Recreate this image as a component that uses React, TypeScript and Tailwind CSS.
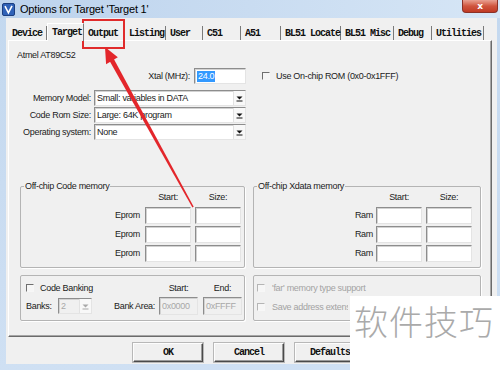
import React from "react"

const ui = "font-['Liberation_Sans',Arial,sans-serif] text-[9px] tracking-[-0.3px] leading-[11px] text-[#1b1b1b]"
const mono = "font-['Liberation_Mono','Courier_New',monospace] font-bold text-[10px] tracking-[-1px] text-[#111]"
const sunken =
  "border border-t-[#8d8d8d] border-l-[#8d8d8d] border-r-[#e4e4e4] border-b-[#e4e4e4] shadow-[inset_1px_1px_0_#d2d2d2]"

// ─── small controls ──────────────────────────────────────────────────────────

function Field({ className, value, disabled, selected }: { className: string; value?: string; disabled?: boolean; selected?: boolean }) {
  return (
    <div className={`flex items-center pl-[2px] ${sunken} ${disabled ? "bg-[#f0f0f0] text-[#a8a8a8]" : "bg-white"} ${className}`}>
      {value && (selected ? <span className="bg-[#3399ff] px-[1px] text-white">{value}</span> : <span>{value}</span>)}
    </div>
  )
}

function Select({ className, value, disabled }: { className: string; value: string; disabled?: boolean }) {
  const c = disabled ? "#a8a8a8" : "#111"
  return (
    <div className={`flex items-stretch ${sunken} ${disabled ? "bg-[#f0f0f0]" : "bg-white"} ${className}`}>
      <span className={`flex flex-1 items-center pl-[2px] ${disabled ? "text-[#a8a8a8]" : ""}`}>{value}</span>
      <span className="flex w-[12px] items-center justify-center border-l border-[#e2e2e2] bg-[#f8f8f8]">
        <svg width="7" height="7" viewBox="0 0 7 7">
          <path d="M0.5 1.5h6L3.5 4.5z" fill={c} />
          <path d="M0.5 6h6" stroke={c} strokeWidth="1" />
        </svg>
      </span>
    </div>
  )
}

function Check({ disabled }: { disabled?: boolean }) {
  return (
    <span
      className={`block h-[8px] w-[8px] shrink-0 border border-r-[#f7f7f7] border-b-[#f7f7f7] bg-[#f6f6f6] ${
        disabled ? "border-t-[#b5b5b5] border-l-[#b5b5b5]" : "border-t-[#6f6f6f] border-l-[#6f6f6f]"
      }`}
    />
  )
}

function Legend({ text }: { text: string }) {
  return <span className="-mt-[6px] ml-[3px] self-start bg-[#f0f0f0] px-[1px]">{text}</span>
}

// ─── tabs ────────────────────────────────────────────────────────────────────

const tabs: { label: string; w: string; selected?: boolean }[] = [
  { label: "Device", w: "w-[39px]" },
  { label: "Target", w: "w-[37px]", selected: true },
  { label: "Output", w: "w-[41px]" },
  { label: "Listing", w: "w-[41px]" },
  { label: "User", w: "w-[37px]" },
  { label: "C51", w: "w-[38px]" },
  { label: "A51", w: "w-[40px]" },
  { label: "BL51 Locate", w: "w-[60px]" },
  { label: "BL51 Misc", w: "w-[53px]" },
  { label: "Debug", w: "w-[38px]" },
  { label: "Utilities", w: "w-[52px]" },
]

function Tabs() {
  return (
    <div className={`flex h-[17px] items-end ${mono}`}>
      {tabs.map((t) =>
        t.selected ? (
          <div
            key={t.label}
            className={`relative z-10 -mb-[1px] flex h-[18px] items-start border-t border-l border-r border-t-white border-l-white border-r-[#7a7a7a] bg-[#f0f0f0] pl-[4px] pt-[3px] ${t.w}`}
          >
            {t.label}
          </div>
        ) : (
          <div key={t.label} className={`flex h-[14px] items-center border-r border-r-[#7a7a7a] pl-[4px] ${t.w}`}>
            {t.label}
          </div>
        )
      )}
    </div>
  )
}

// ─── memory groups ───────────────────────────────────────────────────────────

function MemGroup({ title, label, gap, className }: { title: string; label: string; gap: string; className: string }) {
  return (
    <div className={`flex h-[82px] flex-col rounded-[2px] border border-[#b4b4b4] shadow-[1px_1px_0_#fff] ${className}`}>
      <Legend text={title} />
      <div className="flex h-[11px]">
        <span className={gap === "ml-[5px]" ? "w-[124px]" : "w-[122px]"} />
        <span className="w-[46px] text-center">Start:</span>
        <span className="ml-[4px] w-[46px] text-center">Size:</span>
      </div>
      <div className="mt-[4px] flex flex-col gap-[2px]">
        {[0, 1, 2].map((i) => (
          <div key={i} className="flex h-[17px] items-center">
            <span className="w-[119px] text-right">{label}</span>
            <Field className={`${gap} h-[17px] w-[46px]`} />
            <Field className="ml-[4px] h-[17px] w-[46px]" />
          </div>
        ))}
      </div>
    </div>
  )
}

// ─── dialog ──────────────────────────────────────────────────────────────────

export default function App() {
  return (
    <div className={`relative h-[370px] w-[500px] overflow-hidden bg-linear-to-b from-[#c3d8ef] to-[#cfe0f3] ${ui}`}>
      {/* Title bar */}
      <div className="flex h-[18px] items-center bg-linear-to-r from-[#bcd3ed] via-[#c9dcf1] to-[#d6e6f6] pl-[2px]">
        <svg width="13" height="13" viewBox="0 0 13 13">
          <rect x="0.5" y="0.5" width="12" height="12" rx="1.5" fill="#2f62b8" stroke="#1c3f80" />
          <path d="M3 3.2l3.4 6.6 3.6-7" fill="none" stroke="#fff" strokeWidth="1.6" />
        </svg>
        <span className="ml-[5px] text-[11px] tracking-[-0.2px] text-black">Options for Target 'Target 1'</span>
        <div className="ml-auto mr-[2px] flex h-[13px] w-[36px] items-center justify-center self-start rounded-b-[4px] border border-t-0 border-[#8b3126] bg-linear-to-b from-[#e8a091] via-[#d0553e] to-[#c03a24]">
          <span className="font-['DejaVu_Sans',sans-serif] text-[9px] font-bold leading-none text-white">x</span>
        </div>
      </div>

      {/* Client area */}
      <div className="ml-[6px] mr-[3px] h-[346px] bg-[#f0f0f0] pl-[2px] pt-[5px]">
        <Tabs />

        <div className="flex h-[297px] w-[484px] flex-col border border-t-white border-l-white border-r-[#6b6b6b] border-b-[#6b6b6b] shadow-[inset_-1px_-1px_0_#a6a6a6]">
          <div className="mt-[9px] h-[11px] pl-[8px]">Atmel AT89C52</div>

          <div className="mt-[7px] flex h-[16px] items-center">
            <span className="w-[181px] text-right">Xtal (MHz):</span>
            <Field className="ml-[4px] h-[16px] w-[52px]" value="24.0" selected />
            <span className="ml-[16px]">
              <Check />
            </span>
            <span className="ml-[6px]">Use On-chip ROM (0x0-0x1FFF)</span>
          </div>

          <div className="mt-[6px] flex flex-col gap-[1px]">
            {[
              ["Memory Model:", "Small: variables in DATA"],
              ["Code Rom Size:", "Large: 64K program"],
              ["Operating system:", "None"],
            ].map(([label, value]) => (
              <div key={label} className="flex h-[16px] items-center">
                <span className="w-[82px] text-right">{label}</span>
                <Select className="ml-[3px] h-[16px] w-[152px]" value={value} />
              </div>
            ))}
          </div>

          <div className="ml-[11px] mt-[46px] flex">
            <MemGroup title="Off-chip Code memory" label="Eprom" gap="ml-[5px]" className="w-[225px]" />
            <MemGroup title="Off-chip Xdata memory" label="Ram" gap="ml-[3px]" className="ml-[8px] w-[228px]" />
          </div>

          <div className="ml-[11px] mt-[7px] flex">
            <div className="flex h-[46px] w-[225px] flex-col rounded-[2px] border border-[#b4b4b4] shadow-[1px_1px_0_#fff]">
              <div className="mt-[6px] flex h-[12px] items-center">
                <div className="flex w-[138px] items-center pl-[5px]">
                  <Check />
                  <span className="ml-[6px]">Code Banking</span>
                </div>
                <span className="w-[39px] text-center">Start:</span>
                <span className="ml-[5px] w-[39px] text-center">End:</span>
              </div>
              <div className="mt-[3px] flex h-[18px] items-center">
                <span className="w-[37px] pl-[5px]">Banks:</span>
                <Select className="h-[16px] w-[34px]" value="2" disabled />
                <span className="w-[63px] text-right">Bank Area:</span>
                <Field className="ml-[4px] h-[18px] w-[39px]" value="0x0000" disabled />
                <Field className="ml-[5px] h-[18px] w-[39px]" value="0xFFFF" disabled />
              </div>
            </div>

            <div className="ml-[8px] flex h-[46px] w-[228px] flex-col rounded-[2px] border border-[#b4b4b4] pl-[3px] text-[#a3a3a3] shadow-[1px_1px_0_#fff]">
              <div className="mt-[6px] flex h-[12px] items-center">
                <Check disabled />
                <span className="ml-[7px]">'far' memory type support</span>
              </div>
              <div className="mt-[7px] flex h-[12px] items-center">
                <Check disabled />
                <span className="ml-[7px] w-[76px] overflow-hidden whitespace-nowrap">Save address extension SFR in interrupts</span>
              </div>
            </div>
          </div>
        </div>

        <div className={`ml-[125px] mt-[6px] flex gap-[11px] ${mono}`}>
          {["OK", "Cancel", "Defaults"].map((b) => (
            <div
              key={b}
              className="flex h-[19px] w-[70px] items-center justify-center border border-t-[#fdfdfd] border-l-[#fdfdfd] border-r-[#4a4a4a] border-b-[#4a4a4a] bg-[#f0f0f0] shadow-[inset_-1px_-1px_0_#9a9a9a,0_0_0_1px_#b8b8b8]"
            >
              {b}
            </div>
          ))}
        </div>
      </div>

      {/* Annotation overlays */}
      <div className="absolute left-[82px] top-[19px] h-[30px] w-[43px] border-2 border-[#e02b2b]" />
      <svg className="pointer-events-none absolute left-0 top-0" width="500" height="370" viewBox="0 0 500 370">
        <polygon points="105,47 117.8,57.2 106.1,64.2" fill="#e3262b" />
        <polygon points="112.9,57.2 108.9,59.8 192.4,207.6 193.7,206.8" fill="#e3262b" />
      </svg>

      {/* Watermark */}
      <div className="absolute bottom-0 left-[350px] right-0 top-[296px] bg-white pl-[4px] pt-[5px]">
        <span className="font-['Noto_Sans_CJK_SC','Noto_Sans_CJK_JP',sans-serif] text-[34px] font-light leading-[40px] tracking-[1px] text-[#aaaaaa]">
          软件技巧
        </span>
      </div>
    </div>
  )
}
